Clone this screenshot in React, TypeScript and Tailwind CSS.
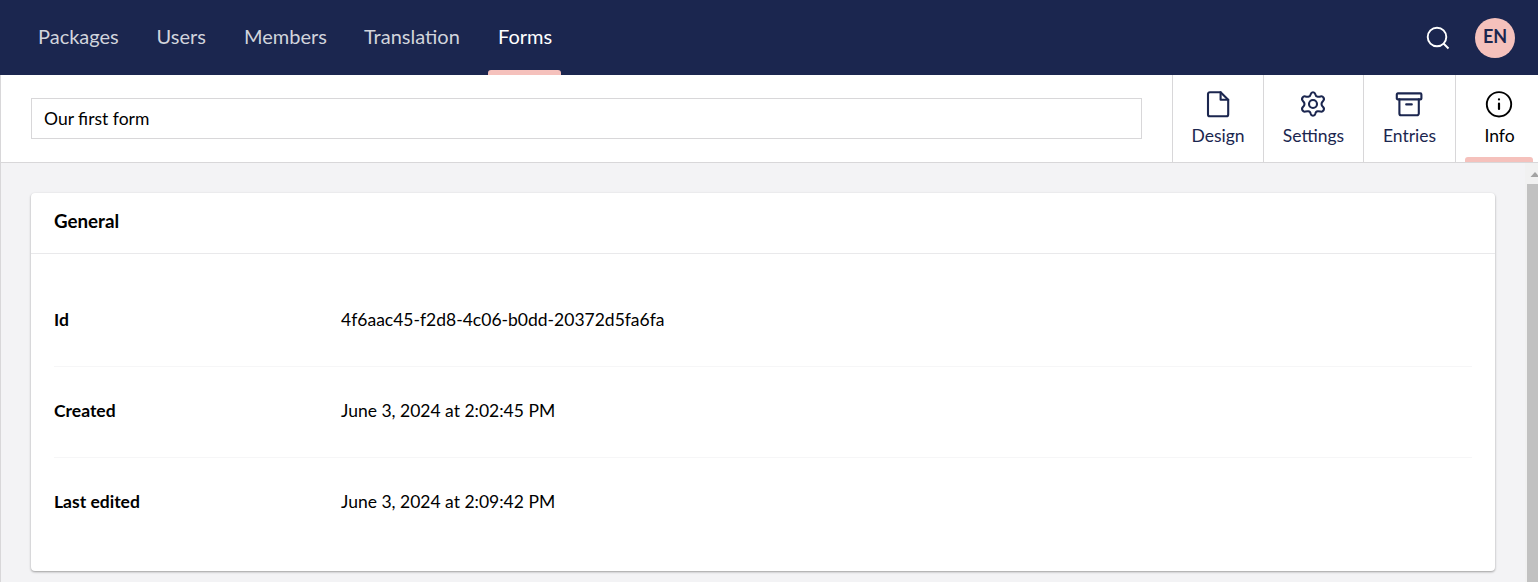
const navItems = [
  { name: "Packages", cls: "w-[118.5px] pl-[10px]" },
  { name: "Users", cls: "w-[87.5px] pl-[10px]" },
  { name: "Members", cls: "w-[120px] pl-[10px]" },
  { name: "Translation", cls: "w-[134px] pl-[10px]" },
  { name: "Forms", cls: "w-[73px] pl-[10px]", active: true },
];

const apps = [
  { name: "Design", cls: "w-[91px] text-[#1b264f]" },
  { name: "Settings", cls: "w-[100px] text-[#1b264f]" },
  { name: "Entries", cls: "w-[92px] text-[#1b264f]" },
  { name: "Info", cls: "w-[88px] -mr-[5px] text-black", active: true },
];

function AppIcon({ name }: { name: string }) {
  return (
    <svg className="mr-px shrink-0" width="28" height="28" viewBox="0 0 28 28" fill="none" stroke="currentColor" strokeWidth="2.1" strokeLinejoin="round" strokeLinecap="round">
      {name === "Design" && (
        <>
          <path d="M16.6 2.2H5.8a1.8 1.8 0 0 0-1.8 1.8v20.4a1.8 1.8 0 0 0 1.8 1.8h16.6a1.8 1.8 0 0 0 1.8-1.8V9.8z" />
          <path d="M16.6 2.2v7.6h7.6" />
        </>
      )}
      {name === "Settings" && (
        <>
          <path d="M11.8 4.1Q12.3 2.2 14 2.2T16.2 4.1Q16.7 6.5 18.7 6.8Q20.3 6.9 21.6 6.4Q23.4 5.9 24.5 7.6Q25.6 9.5 24.1 10.9Q22.5 12.4 22.5 14T24.1 17.1Q25.6 18.5 24.5 20.4Q23.4 22.1 21.6 21.6Q20.3 21.1 18.7 21.2Q16.7 21.5 16.2 23.9Q15.7 25.8 14 25.8T11.8 23.9Q11.3 21.5 9.3 21.2Q7.7 21.1 6.4 21.6Q4.6 22.1 3.5 20.4Q2.4 18.5 3.9 17.1Q5.5 15.6 5.5 14T3.9 10.9Q2.4 9.5 3.5 7.6Q4.6 5.9 6.4 6.4Q7.7 6.9 9.3 6.8Q11.3 6.5 11.8 4.1Z" />
          <circle cx="14" cy="14" r="4" />
        </>
      )}
      {name === "Entries" && (
        <>
          <rect x="1.8" y="3.4" width="24.6" height="6" rx="1" />
          <path d="M4.4 9.4v14a1.8 1.8 0 0 0 1.8 1.8h15.8a1.8 1.8 0 0 0 1.8-1.8v-14M11.2 14.4h5.6" />
        </>
      )}
      {name === "Info" && (
        <>
          <circle cx="14" cy="14.3" r="12.2" strokeWidth="1.9" />
          <path d="M14 13.6v5.4M14 9.3v.2" strokeWidth="2.2" />
        </>
      )}
    </svg>
  );
}

function Row({ label, value, last }: { label: string; value: string; last?: boolean }) {
  return (
    <div className={`flex h-[91px] items-center pb-[2px] text-[17.5px] ${last ? "" : "border-b border-[#f6f6f7]"}`}>
      <div className="w-[287px] font-bold">{label}</div>
      <div>{value}</div>
    </div>
  );
}

export default function App() {
  return (
    <div className="flex h-[582px] w-[1538px] flex-col overflow-hidden bg-[#f3f3f5] font-['Lato',sans-serif] text-black">
      <header className="flex h-[75px] shrink-0 items-center bg-[#1b264f] pl-[28px] pr-[23px] text-[20px]">
        <nav className="flex flex-1">
          {navItems.map((n) => (
            <div key={n.name} className={`flex h-[75px] flex-col justify-between pt-[21px] ${n.cls} ${n.active ? "text-white" : "text-[#d1d4dc]"}`}>
              <span>{n.name}</span>
              {n.active && <span className="-ml-[10px] h-[5px] w-[73px] rounded-t-[3px] bg-[#f5c1bc]" />}
            </div>
          ))}
        </nav>
        <svg className="mr-[25px]" width="24" height="24" viewBox="0 0 24 24" fill="none" stroke="white" strokeWidth="1.9">
          <circle cx="11" cy="11" r="9.3" />
          <path d="M17.5 17.5l5 5" />
        </svg>
        <div className="flex h-10 w-10 items-center justify-center rounded-full bg-[#f5c1bc] pb-[2px] text-[18px] font-bold text-[#1b264f]">EN</div>
      </header>
      <div className="flex h-[88px] shrink-0 border-b border-l border-[#d8d7d9] bg-white">
        <div className="flex-1 px-[30px] pt-[23px]">
          <div className="flex h-[41px] items-center border border-[#d8d7d9] px-[12px] pt-[2px] text-[17.5px]">Our first form</div>
        </div>
        {apps.map((a) => (
          <div key={a.name} className={`flex shrink-0 flex-col items-center border-l border-[#d8d7d9] pt-[15px] text-[17.5px] ${a.cls}`}>
            <AppIcon name={a.name} />
            <span className="mt-[5px]">{a.name}</span>
            {a.active && <span className="mr-px mt-auto h-[5px] w-[68px] rounded-t-[3px] bg-[#f5c1bc]" />}
          </div>
        ))}
      </div>
      <div className="flex flex-1 justify-between border-l border-[#d8d7d9]">
        <main className="pl-[30px] pt-[30px]">
          <section className="h-[378px] w-[1464px] rounded-[4px] bg-white shadow-[0_1px_3px_rgba(0,0,0,0.14),0_1px_2px_rgba(0,0,0,0.24)]">
            <h2 className="h-[61px] border-b border-[#e9e9eb] px-[23px] pt-[14px] text-[18.75px] font-bold">General</h2>
            <div className="px-[23px] pt-[22px]">
              <Row label="Id" value="4f6aac45-f2d8-4c06-b0dd-20372d5fa6fa" />
              <Row label="Created" value="June 3, 2024 at 2:02:45 PM" />
              <Row label="Last edited" value="June 3, 2024 at 2:09:42 PM" last />
            </div>
          </section>
        </main>
        <div className="flex w-[13px] flex-col bg-[#f1f1f1]">
          <svg width="13" height="21" viewBox="0 0 13 21">
            <path d="M5.5 14l4.5-5 4.5 5z" fill="#a3a3a3" />
          </svg>
          <div className="ml-[2px] flex-1 bg-[#c1c1c1]" />
        </div>
      </div>
    </div>
  );
}
